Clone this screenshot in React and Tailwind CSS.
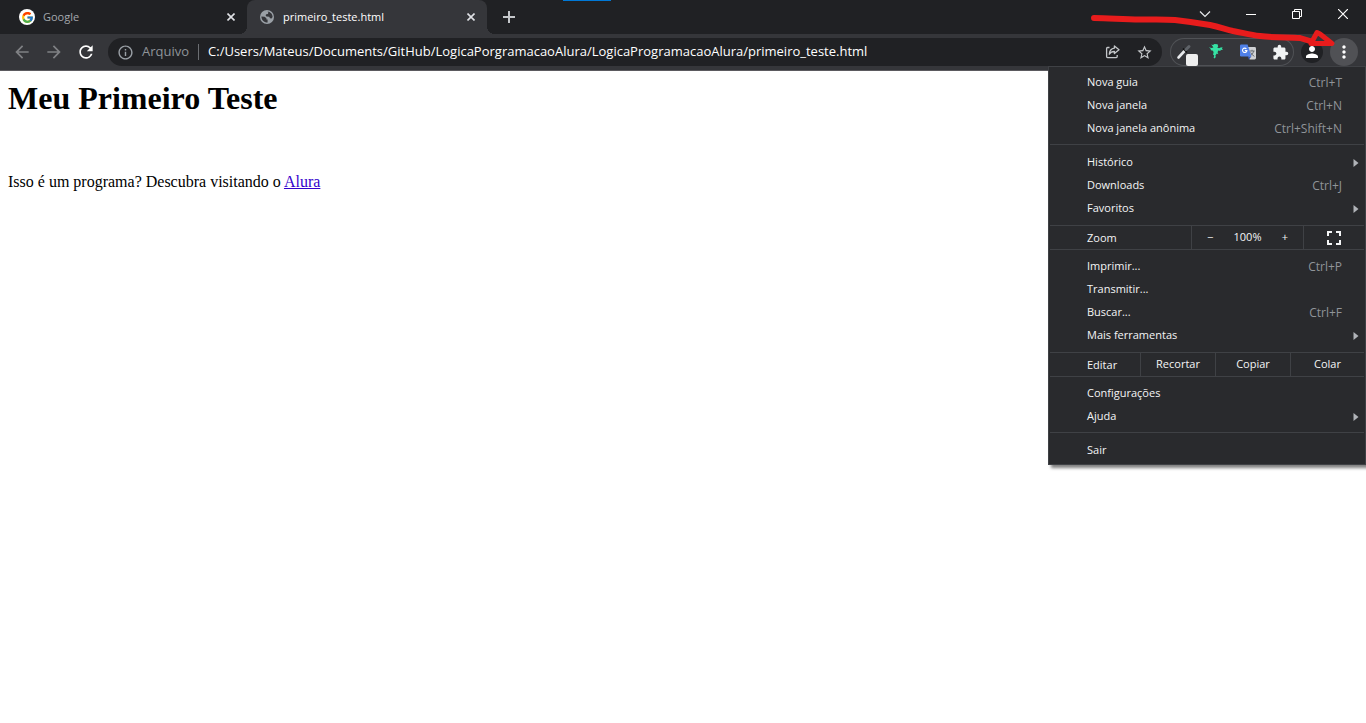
import React, { useState } from 'react';
import { FcGoogle } from 'react-icons/fc';
import {
  MdArrowBack, MdArrowForward, MdRefresh, MdInfoOutline, MdStarBorder,
  MdExtension, MdPerson, MdMoreVert, MdFullscreen
} from 'react-icons/md';

const GlobeIcon = () => (
  <svg viewBox="0 0 16 16" className="h-4 w-4 shrink-0">
    <circle cx="8" cy="8" r="7" fill="#9aa0a6" />
    <path
      d="M2.4 7.4 L5.6 7.8 L7.4 9.2 L7.4 10.4 L8.6 10.6 L8.6 13.5 C5 13.6 2.4 10.8 2.4 7.4 Z M8.6 2.5 C11.4 2.8 13.6 5.2 13.6 8 L12.6 9.4 L11 9.2 L10.2 7.8 L7.4 7.4 L6.6 6.2 L7.2 5.2 L8.8 5 L9.4 3.8 Z"
      fill="#35363a"
    />
  </svg>
);

const CloseIcon = ({ className }) => (
  <svg viewBox="0 0 8 8" className={className} fill="none" stroke="currentColor" strokeWidth="1.6">
    <path d="M0.5 0.5 L7.5 7.5 M7.5 0.5 L0.5 7.5" />
  </svg>
);

const ShareIcon = () => (
  <svg viewBox="0 0 16 16" className="h-4 w-4" fill="none" stroke="#c4c7ca" strokeWidth="1.3">
    <path d="M5.5 3.5 H3.6 Q2.6 3.5 2.6 4.5 V12.6 Q2.6 13.6 3.6 13.6 H12.2 Q13.2 13.6 13.2 12.6 V11" />
    <path d="M10.4 2 L15 5.8 L10.4 9.6 V7.5 C8 7.5 6.4 8.4 5.3 10.2 C5.5 7 7.2 4.6 10.4 4.1 Z" strokeLinejoin="round" />
  </svg>
);

const PickerIcon = () => (
  <svg viewBox="0 0 28 28" className="h-7 w-7">
    <path d="M8.5 19.5 L14.5 13" stroke="#e8eaed" strokeWidth="2.6" strokeLinecap="round" />
    <path d="M13 10.5 L17 14.5" stroke="#111" strokeWidth="1.6" />
    <path d="M16 11.5 L19 8.5" stroke="#5f6368" strokeWidth="3" strokeLinecap="round" />
    <rect x="16" y="16" width="12" height="12" rx="2" fill="#eeeeee" />
  </svg>
);

const BirdIcon = () => (
  <svg viewBox="0 0 16 18" className="h-[18px] w-4" fill="#36e2a4">
    <path d="M3.2 1.6 L5 2 L6.4 1 L9.6 1.2 L10.2 3.4 L9.2 4.6 L11 5.2 L12.6 4.4 L14.6 4.2 L14 5.6 L14.8 7 L12.4 6.8 L12.6 8 L10.2 7.6 L9.6 9.2 L10.4 11.2 L8.8 10.6 L7.4 12.4 L7.8 14 L6.6 15.4 L5.6 14.8 L6.2 12.6 L5 11.4 L5.6 9.4 L5 7.8 L3 7.2 L2.4 5.6 L0.8 4.2 L3.6 5 L5.4 4.6 L4.6 3.2 Z" />
  </svg>
);

const TranslateIcon = () => (
  <svg viewBox="0 0 18 18" className="h-[18px] w-[18px]">
    <path d="M6 4 H15.6 Q17 4 17 5.4 V15 Q17 16.4 15.6 16.4 H10.6 Z" fill="#cfd1d4" />
    <path d="M10.6 8 H15.6 M13 6.8 V8 M14.8 8 Q14 11.4 11 13 M11.6 9.4 Q12.8 11.8 15.4 13.4" stroke="#6b7076" strokeWidth="1" fill="none" />
    <path d="M2.2 1.4 H8.6 L12.4 13.4 H2.2 Q1 13.4 1 12.2 V2.6 Q1 1.4 2.2 1.4 Z" fill="#4f80e8" />
    <path d="M9 13.4 H12.4 L9.8 16.6 Z" fill="#2f55b8" />
    <path d="M7.4 5.9 A2.2 2.2 0 1 0 7.9 7.6 H5.8" stroke="#fff" strokeWidth="1.1" fill="none" />
  </svg>
);

const Tab = ({ title, icon, active }) => (
  <div
    className={`relative flex w-60 items-center px-3 text-[11px] ${
      active ? 'rounded-t-lg bg-[#35363a] text-white' : 'text-[#a4a8ad]'
    }`}
  >
    {active && (
      <>
        <span className="absolute -left-2 bottom-0 h-2 w-2 bg-[radial-gradient(circle_at_0_0,#202124_8px,#35363a_8px)]" />
        <span className="absolute -right-2 bottom-0 h-2 w-2 bg-[radial-gradient(circle_at_100%_0,#202124_8px,#35363a_8px)]" />
      </>
    )}
    {icon}
    <span className="ml-2 flex-1 truncate">{title}</span>
    <button aria-label={`Fechar ${title}`}>
      <CloseIcon className="h-2 w-2 text-[#dfe1e5]" />
    </button>
  </div>
);

const WindowControls = () => (
  <div className="flex h-7 text-white">
    <button aria-label="Pesquisar guias" className="flex w-[46px] items-center justify-center">
      <svg viewBox="0 0 12 12" className="h-3 w-3" fill="none" stroke="#e8eaed" strokeWidth="1.2"><path d="M1 3.5 L6 8.5 L11 3.5" /></svg>
    </button>
    <button aria-label="Minimizar" className="flex w-[46px] items-center justify-center">
      <svg viewBox="0 0 10 10" className="h-[10px] w-[10px]" stroke="currentColor"><path d="M0 5.5 H10" /></svg>
    </button>
    <button aria-label="Restaurar" className="flex w-[46px] items-center justify-center">
      <svg viewBox="0 0 10 10" className="h-[10px] w-[10px]" fill="none" stroke="currentColor">
        <path d="M0.5 2.5 H7.5 V9.5 H0.5 Z M2.5 2.5 V0.5 H9.5 V7.5 H7.5" />
      </svg>
    </button>
    <button aria-label="Fechar" className="flex w-[46px] items-center justify-center">
      <svg viewBox="0 0 10 10" className="h-[10px] w-[10px]" stroke="currentColor" strokeWidth="1.2"><path d="M0 0 L10 10 M10 0 L0 10" /></svg>
    </button>
  </div>
);

const TabStrip = () => (
  <div className="relative flex h-[34px] justify-between bg-[#202124] pl-[7px]">
    <div className="flex">
      <Tab title="Google" icon={<span className="flex h-4 w-4 items-center justify-center rounded-full bg-white"><FcGoogle size={13} /></span>} />
      <Tab title="primeiro_teste.html" icon={<GlobeIcon />} active />
      <button aria-label="Nova guia" className="flex w-11 items-center justify-center">
        <svg viewBox="0 0 12 12" className="h-3 w-3" stroke="#c4c7ca" strokeWidth="2"><path d="M6 0 V12 M0 6 H12" /></svg>
      </button>
    </div>
    <WindowControls />
    <div className="absolute left-[563px] top-0 h-px w-12 bg-[#0078d7]" />
  </div>
);

const Toolbar = ({ url, onUrlChange }) => (
  <div className="flex h-[37px] items-center border-b border-[#5b5a5f] bg-[#35363a] pl-[6px] pr-2">
    <button aria-label="Voltar" className="flex w-8 justify-center text-[#7f8184]"><MdArrowBack size={20} /></button>
    <button aria-label="Avançar" className="flex w-8 justify-center text-[#7f8184]"><MdArrowForward size={20} /></button>
    <button aria-label="Recarregar" className="flex w-8 justify-center text-white"><MdRefresh size={20} /></button>

    <div className="ml-[6px] flex h-7 flex-1 items-center rounded-full bg-[#202124] pl-[9px] pr-[9px]">
      <MdInfoOutline size={17} className="text-[#9aa0a6]" />
      <label htmlFor="url" className="ml-2 text-[13px] text-[#8f9499]">Arquivo</label>
      <span className="mx-[9px] h-4 w-px bg-[#6b6e72]" />
      <input
        id="url"
        type="text"
        value={url}
        onChange={(e) => onUrlChange(e.target.value)}
        className="min-w-0 flex-1 bg-transparent text-[13px] text-white outline-none"
      />
      <button aria-label="Compartilhar" className="mr-4"><ShareIcon /></button>
      <button aria-label="Favoritar"><MdStarBorder size={17} className="text-[#c4c7ca]" /></button>
    </div>

    <div className="ml-2 flex h-7 gap-1 rounded-full ring-1 ring-inset ring-[#505256]">
      <button aria-label="Seletor de cores" className="flex w-7 items-center justify-center"><PickerIcon /></button>
      <button aria-label="Extensão" className="flex w-7 items-center justify-center"><BirdIcon /></button>
      <button aria-label="Tradutor" className="flex w-7 items-center justify-center"><TranslateIcon /></button>
      <button aria-label="Extensões" className="flex w-7 items-center justify-center text-[#f1f3f4]"><MdExtension size={17} /></button>
    </div>
    <button aria-label="Perfil" className="ml-[7px] flex h-[22px] w-[22px] items-center justify-center rounded-full bg-[#202124] text-white">
      <MdPerson size={18} />
    </button>
    <button aria-label="Menu" className="ml-[7px] flex h-7 w-7 items-center justify-center rounded-full bg-[#505155] text-white">
      <MdMoreVert size={20} />
    </button>
  </div>
);

const MenuItem = ({ label, shortcut, submenu }) => (
  <button className="flex h-[23px] w-full items-center justify-between pb-[2px] pl-[38px] pr-[6px] text-left">
    <span>{label}</span>
    {shortcut && <span className="mr-[17px] text-xs text-[#909499]">{shortcut}</span>}
    {submenu && (
      <svg viewBox="0 0 6 8" className="h-2 w-[6px]" fill="#b0b3b8"><path d="M0.5 0 L5.5 4 L0.5 8 Z" /></svg>
    )}
  </button>
);

const Separator = () => <hr className="mx-px mb-[7px] mt-[3px] border-[#3f4145]" />;

const rowClass = 'mx-px mb-[6px] mt-1 flex h-[25px] border-y border-[#3f4145]';

const BrowserMenu = () => {
  const [zoom, setZoom] = useState(100);

  return (
    <div className="absolute right-0 top-[66px] w-[318px] border border-[#3f4145] bg-[#292a2d] pb-px pt-[5px] text-[11px] text-[#f4f5f6] shadow-[3px_3px_3px_rgba(0,0,0,0.5)]">
      <MenuItem label="Nova guia" shortcut="Ctrl+T" />
      <MenuItem label="Nova janela" shortcut="Ctrl+N" />
      <MenuItem label="Nova janela anônima" shortcut="Ctrl+Shift+N" />
      <Separator />
      <MenuItem label="Histórico" submenu />
      <MenuItem label="Downloads" shortcut="Ctrl+J" />
      <MenuItem label="Favoritos" submenu />

      <div className={rowClass}>
        <span className="flex flex-1 items-center pl-[37px] pt-[2px]">Zoom</span>
        <div className="flex w-28 items-center justify-between border-l border-[#3f4145] px-[15px]">
          <button aria-label="Diminuir zoom" onClick={() => setZoom(zoom - 10)}>−</button>
          <span>{zoom}%</span>
          <button aria-label="Aumentar zoom" onClick={() => setZoom(zoom + 10)}>+</button>
        </div>
        <button aria-label="Tela cheia" className="flex w-[61px] items-center justify-center border-l border-[#3f4145]">
          <MdFullscreen size={24} />
        </button>
      </div>

      <MenuItem label="Imprimir..." shortcut="Ctrl+P" />
      <MenuItem label="Transmitir..." />
      <MenuItem label="Buscar..." shortcut="Ctrl+F" />
      <MenuItem label="Mais ferramentas" submenu />

      <div className={rowClass}>
        <span className="flex flex-1 items-center pl-[37px] pt-[2px]">Editar</span>
        <button className="w-[75px] border-l border-[#3f4145]">Recortar</button>
        <button className="w-[75px] border-l border-[#3f4145]">Copiar</button>
        <button className="w-[74px] border-l border-[#3f4145]">Colar</button>
      </div>

      <MenuItem label="Configurações" />
      <MenuItem label="Ajuda" submenu />
      <Separator />
      <MenuItem label="Sair" />
    </div>
  );
};

// Hand drawn arrow pointing at the menu button
const Arrow = () => (
  <svg
    viewBox="0 0 256 50"
    className="pointer-events-none absolute right-5 top-0 h-[50px] w-64"
    fill="none"
    stroke="#e81c1c"
    strokeWidth="6"
    strokeLinecap="round"
    strokeLinejoin="round"
  >
    <path d="M4 18 C20 18 32 19.5 50 19.5 C64 19.5 74 19 85 20 C98 21.5 108 23 120 25 C130 27 136 29.5 143 31 C154 33 160 35 170 36 C186 38 200 37 210 38 L220 41" />
    <path d="M221 43.5 L227 32.5 L230 34 L242 43.5 Z" strokeWidth="5" />
  </svg>
);

export default function App() {
  const [url, setUrl] = useState(
    'C:/Users/Mateus/Documents/GitHub/LogicaPorgramacaoAlura/LogicaProgramacaoAlura/primeiro_teste.html'
  );

  return (
    <div className="relative min-h-screen overflow-hidden bg-white font-['Open_Sans','Noto_Sans',sans-serif]">
      <TabStrip />
      <Toolbar url={url} onUrlChange={setUrl} />

      <main className="px-2 pt-[9px] font-['Liberation_Serif',serif] text-base text-black">
        <h1 className="text-[32px] font-bold leading-9">Meu Primeiro Teste</h1>
        <p className="mt-[54px]">
          Isso é um programa? Descubra visitando o{' '}
          <a href="#alura" className="text-[#3300cc] underline">Alura</a>
        </p>
      </main>

      <BrowserMenu />
      <Arrow />
    </div>
  );
}
